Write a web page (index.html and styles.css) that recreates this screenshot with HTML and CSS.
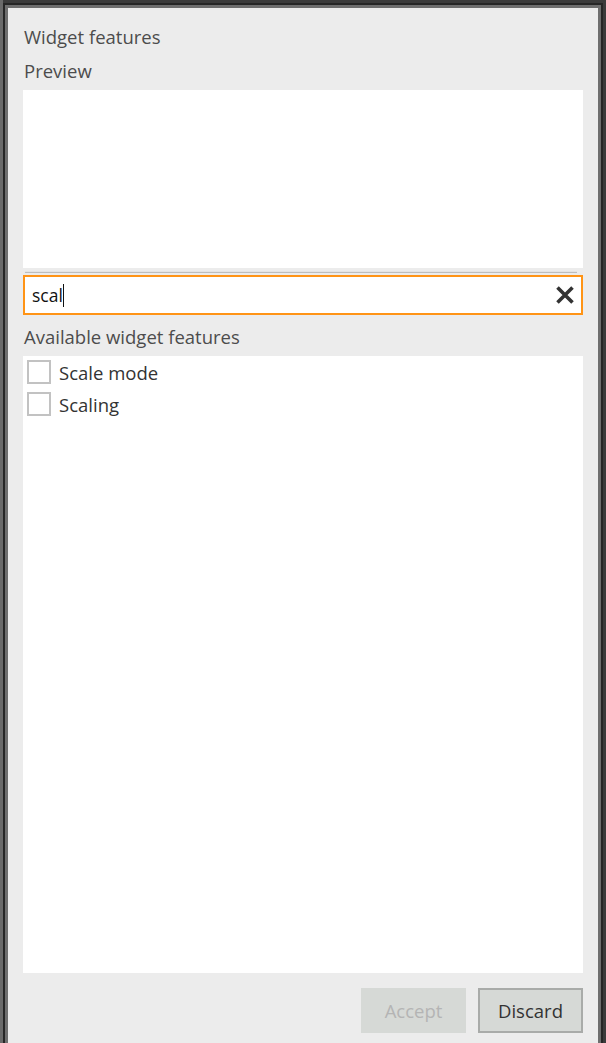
FILE: index.html
```html
<!DOCTYPE html>
<html>
<head>
<meta charset="utf-8">
<link rel="stylesheet" href="styles.css">
</head>
<body>
<div class="frame">
  <div class="panel">
    <div class="title">Widget features</div>
    <div class="label">Preview</div>
    <div class="preview"></div>
    <div class="divider"></div>
    <div class="search">
      <span class="query">scal</span><span class="caret"></span>
      <svg class="clear" width="20" height="20" viewBox="0 0 20 20"><path d="M2.5 2.5 L17.5 17.5 M17.5 2.5 L2.5 17.5" stroke="#333" stroke-width="3.6" stroke-linecap="butt"/></svg>
    </div>
    <div class="label">Available widget features</div>
    <div class="list">
      <div class="item"><span class="box"></span><span class="name">Scale mode</span></div>
      <div class="item"><span class="box"></span><span class="name">Scaling</span></div>
    </div>
    <div class="footer">
      <button class="btn disabled">Accept</button>
      <button class="btn primary">Discard</button>
    </div>
  </div>
</div>
</body>
</html>
```
FILE: styles.css
```css
html, body {
  margin: 0;
  padding: 0;
  height: 1043px;
  overflow: hidden;
}
body {
  background: linear-gradient(to right, #6a6a6a 0, #6a6a6a 3px, #3b3b3b 3px);
  font-family: "Open Sans", "Noto Sans", sans-serif;
}
.frame {
  margin: 3px 3px 0 3px;
  height: 1040px;
  box-sizing: border-box;
  border: 2px solid #262626;
  border-bottom: 0;
  display: flex;
}
.panel {
  flex: 1;
  display: flex;
  flex-direction: column;
  background: #ececec;
  border: 3px solid #6e6e6e;
  border-bottom: 0;
  padding: 17px 15px 10px 15px;
}
.title, .label {
  height: 24px;
  line-height: 24px;
  font-size: 18.5px;
  color: #4c4c4c;
  padding-left: 1px;
}
.label {
  margin-top: 10px;
}
.preview {
  margin-top: 7px;
  height: 178px;
  background: #ffffff;
}
.divider {
  margin: 3px 6px 0 2px;
  height: 1px;
  border-top: 1px solid #e4e4e4;
  background: #bdbdbd;
}
.search {
  margin-top: 2px;
  height: 40px;
  box-sizing: border-box;
  border: 2px solid #ff9416;
  background: #ffffff;
  display: flex;
  align-items: center;
  padding: 0 6px 0 7px;
}
.query {
  font-size: 17.5px;
  color: #111;
}
.caret {
  width: 1px;
  height: 23px;
  background: #111;
  margin-left: 0;
}
.clear {
  margin-left: auto;
}
.list {
  margin-top: 7px;
  flex: 1;
  background: #ffffff;
  padding: 4px 4px;
  display: flex;
  flex-direction: column;
  gap: 8px;
}
.item {
  display: flex;
  align-items: center;
  height: 24px;
  gap: 8px;
}
.box {
  width: 24px;
  height: 24px;
  box-sizing: border-box;
  border: 2px solid #c2c2c2;
  background: #fff;
}
.name {
  font-size: 18.5px;
  color: #333;
}
.footer {
  margin-top: 15px;
  display: flex;
  justify-content: flex-end;
  gap: 12px;
}
.btn {
  width: 105px;
  height: 45px;
  box-sizing: border-box;
  font-family: "Open Sans", "Noto Sans", sans-serif;
  font-size: 18.5px;
  padding: 0;
}
.btn.disabled {
  background: #d6d9d6;
  border: 2px solid #d6d9d6;
  color: #b4b4b4;
}
.btn.primary {
  background: #d6d9d6;
  border: 2px solid #a9aba9;
  color: #333;
}
```
